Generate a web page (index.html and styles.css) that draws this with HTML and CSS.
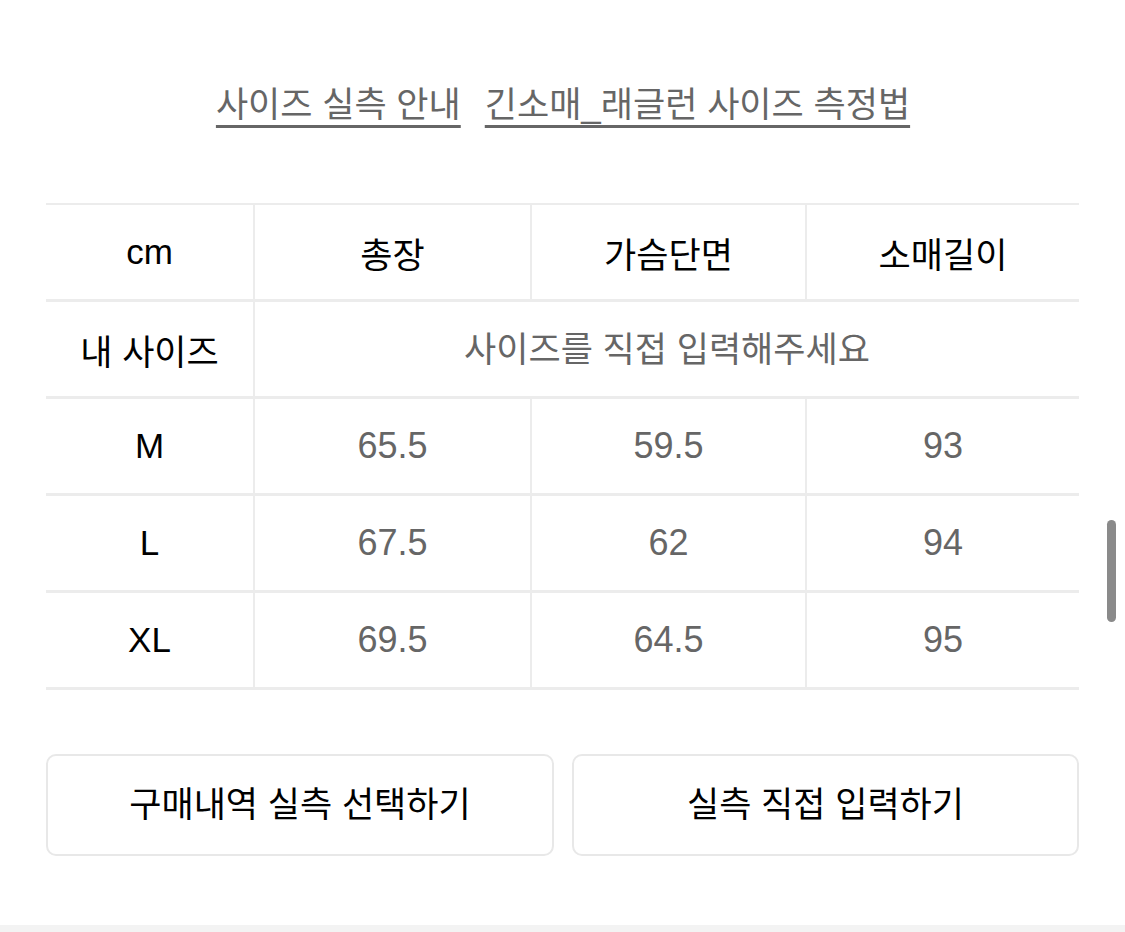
FILE: index.html
```html
<!DOCTYPE html>
<html lang="ko">
<head>
<meta charset="utf-8">
<title>사이즈 실측</title>
<link rel="stylesheet" href="styles.css">
</head>
<body>
<div class="page">
  <nav class="links">
    <a class="link" href="#">사이즈 실측 안내</a>
    <a class="link" href="#">긴소매_래글런 사이즈 측정법</a>
  </nav>

  <div class="size-table">
    <div class="cell head first latin">cm</div>
    <div class="cell head">총장</div>
    <div class="cell head">가슴단면</div>
    <div class="cell head">소매길이</div>

    <div class="cell head first">내 사이즈</div>
    <div class="cell span3 hint">사이즈를 직접 입력해주세요</div>

    <div class="cell head first latin">M</div>
    <div class="cell val">65.5</div>
    <div class="cell val">59.5</div>
    <div class="cell val">93</div>

    <div class="cell head first latin">L</div>
    <div class="cell val">67.5</div>
    <div class="cell val">62</div>
    <div class="cell val">94</div>

    <div class="cell head first latin">XL</div>
    <div class="cell val">69.5</div>
    <div class="cell val">64.5</div>
    <div class="cell val">95</div>
  </div>

  <div class="actions">
    <button class="btn">구매내역 실측 선택하기</button>
    <button class="btn">실측 직접 입력하기</button>
  </div>
</div>
<div class="bottom-band"></div>
<div class="scrollbar"></div>
</body>
</html>
```

FILE: styles.css
```css
html, body {
  margin: 0;
  padding: 0;
  background: #ffffff;
}

body {
  font-family: "Liberation Sans", "Noto Sans CJK KR", sans-serif;
  color: #000000;
  width: 1125px;
  height: 932px;
  overflow: hidden;
  position: relative;
}

.page {
  padding: 79px 46px 0 46px;
  height: 850px;
}

.links {
  display: flex;
  justify-content: center;
  gap: 24px;
  height: 55px;
  padding-left: 1px;
}

.link {
  font-size: 35px;
  line-height: 52px;
  color: #666666;
  text-decoration: underline;
  text-decoration-thickness: 3px;
  text-underline-offset: 8px;
}

.size-table {
  margin-top: 69px;
  width: 1033px;
  display: grid;
  grid-template-columns: 207px 277px 275px 274px;
  grid-auto-rows: 97px;
  border-top: 2px solid #ececec;
}

.cell {
  display: flex;
  align-items: center;
  justify-content: center;
  border-bottom: 3px solid #ececec;
  border-left: 2px solid #ececec;
  box-sizing: border-box;
  font-size: 35px;
}

.cell.first {
  border-left: none;
}

.head {
  color: #000000;
  font-weight: 400;
  font-size: 35px;
}

.head.latin {
  font-size: 35px;
}

.span3 {
  grid-column: span 3;
}

.hint {
  color: #666666;
  font-size: 35px;
  padding-bottom: 6px;
}

.val {
  color: #666666;
  font-size: 36px;
}

.actions {
  margin-top: 64px;
  display: grid;
  grid-template-columns: 508px 507px;
  gap: 18px;
  width: 1033px;
}

.btn {
  height: 102px;
  background: #ffffff;
  border: 2px solid #e8e8e8;
  border-radius: 10px;
  font-family: "Liberation Sans", "Noto Sans CJK KR", sans-serif;
  font-size: 35px;
  font-weight: 400;
  color: #000000;
  padding: 0 0 7px 0;
}

.bottom-band {
  position: absolute;
  left: 0;
  bottom: 0;
  width: 100%;
  height: 7px;
  background: #f3f3f3;
}

.scrollbar {
  position: absolute;
  left: 1107px;
  top: 520px;
  width: 9px;
  height: 102px;
  border-radius: 5px;
  background: #8a8a8a;
}
```
